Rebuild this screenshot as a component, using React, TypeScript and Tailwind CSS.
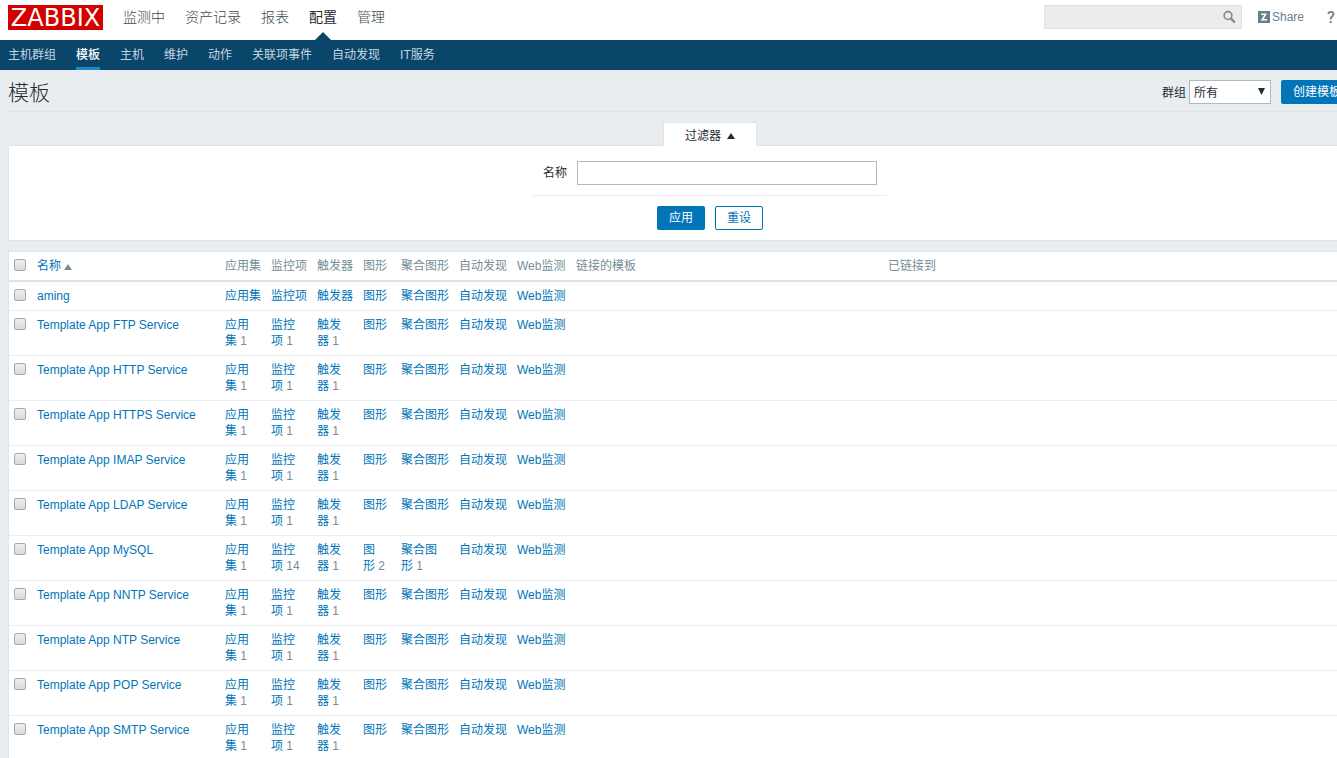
import React from "react";

const mainMenu = ["监测中", "资产记录", "报表", "配置", "管理"];
const subMenu = ["主机群组", "模板", "主机", "维护", "动作", "关联项事件", "自动发现", "IT服务"];
const entities = ["应用集", "监控项", "触发器", "图形", "聚合图形", "自动发现", "Web监测"];

type Template = { name: string; counts: number[] };

const templates: Template[] = [
  { name: "aming", counts: [] },
  { name: "Template App FTP Service", counts: [1, 1, 1] },
  { name: "Template App HTTP Service", counts: [1, 1, 1] },
  { name: "Template App HTTPS Service", counts: [1, 1, 1] },
  { name: "Template App IMAP Service", counts: [1, 1, 1] },
  { name: "Template App LDAP Service", counts: [1, 1, 1] },
  { name: "Template App MySQL", counts: [1, 14, 1, 2, 1] },
  { name: "Template App NNTP Service", counts: [1, 1, 1] },
  { name: "Template App NTP Service", counts: [1, 1, 1] },
  { name: "Template App POP Service", counts: [1, 1, 1] },
  { name: "Template App SMTP Service", counts: [1, 1, 1] },
];

function Checkbox({ label }: { label: string }) {
  return (
    <input
      type="checkbox"
      aria-label={label}
      className="mt-px block size-3 appearance-none rounded-xs border border-[#a9a9a9] bg-linear-to-b from-[#efefef] to-[#d9d9d9] checked:bg-[#0275b8]"
    />
  );
}

function Header() {
  return (
    <header>
      <div className="flex h-10 items-start bg-white pr-[85px] pl-2">
        <a
          href="#"
          className="mt-[5px] flex h-[25px] w-[95px] items-center justify-center bg-[#d40000] pt-px font-['DejaVu_Sans',sans-serif] text-2xl leading-none text-white"
        >
          ZABBIX
        </a>
        <nav className="ml-5 flex gap-5 text-sm">
          {mainMenu.map((item) => (
            <a
              key={item}
              href="#"
              className={
                item === "配置"
                  ? "relative flex h-10 items-start pt-[7px] text-[#1f2c33]"
                  : "flex h-10 items-start pt-[7px] font-light text-[#3c4a52]"
              }
            >
              {item}
              {item === "配置" && (
                <svg className="absolute bottom-0 left-1/2 -translate-x-1/2" width="16" height="8" viewBox="0 0 16 8" aria-hidden="true">
                  <path d="M0 8 8 0l8 8Z" fill="#0a466a" />
                </svg>
              )}
            </a>
          ))}
        </nav>
        <form className="mt-[5px] ml-auto flex h-6 w-[198px] items-center border border-[#e0e3e5] bg-[#ececec]" onSubmit={(e) => e.preventDefault()}>
          <input type="text" aria-label="搜索" className="h-full min-w-0 flex-1 px-1 outline-none" />
          <button type="submit" aria-label="搜索" className="flex w-6 items-center justify-center">
            <svg width="14" height="14" viewBox="0 0 14 14" fill="none" stroke="#768d99" aria-hidden="true">
              <circle cx="6" cy="5.5" r="3.9" strokeWidth="1.6" />
              <path d="m8.8 8.4 4.1 4.1" strokeWidth="2.2" />
            </svg>
          </button>
        </form>
        <a href="#" className="mt-[9px] ml-4 flex items-center gap-0.5 text-[#69808d]">
          <svg width="12" height="12" viewBox="0 0 12 12" aria-hidden="true">
            <path d="M0 0h12v12H0Z" fill="#69808d" />
            <path d="M3.2 3.2h4.4L4.2 8.8H9" fill="none" stroke="#fff" strokeWidth="1.6" />
          </svg>
          Share
        </a>
        <a href="#" className="mt-[9px] ml-[23px] w-2 font-['Roboto',sans-serif] text-base leading-[18px] font-medium text-[#69808d]">
          ?
        </a>
      </div>
      <nav className="flex h-[30px] gap-5 bg-[#0a466a] px-2">
        {subMenu.map((item) => (
          <a
            key={item}
            href="#"
            className={
              item === "模板"
                ? "flex items-center border-y-3 border-t-transparent border-b-[#1a87c9] font-medium text-white"
                : "flex items-center border-y-3 border-transparent text-[#c5d6e0]"
            }
          >
            {item}
          </a>
        ))}
      </nav>
    </header>
  );
}

function Filter() {
  return (
    <section className="mt-2.5">
      <div className="relative mx-auto -mb-px flex h-6 w-[94px] border border-b-0 border-[#dfe4e7] bg-white">
        <button type="button" className="flex w-full items-center justify-center gap-1.5 pt-0.5">
          过滤器
          <svg width="8" height="6" viewBox="0 0 8 6" aria-hidden="true">
            <path d="M0 6 4 0l4 6Z" fill="#1f2c33" />
          </svg>
        </button>
      </div>
      <form className="border border-[#dfe4e7] bg-white pt-[15px] pb-2.5" onSubmit={(e) => e.preventDefault()}>
        <div className="mx-auto flex w-[354px] items-center justify-center gap-2.5 border-b border-[#ebeef0] pb-2.5">
          <label htmlFor="filter-name">名称</label>
          <input id="filter-name" type="text" className="h-6 w-[300px] border border-[#acbbc2] px-1 outline-none" />
        </div>
        <div className="mt-2.5 flex justify-center gap-2.5">
          <button type="submit" className="h-6 w-12 rounded-xs bg-[#0275b8] text-white">
            应用
          </button>
          <button type="reset" className="h-6 w-12 rounded-xs border border-[#0275b8] bg-white text-[#0275b8]">
            重设
          </button>
        </div>
      </form>
    </section>
  );
}

function TemplateTable() {
  return (
    <table className="mt-2.5 w-full table-fixed border-separate border-spacing-0 border border-[#dfe4e7] bg-white text-left [&_td]:border-b [&_td]:border-[#ebeef0] [&_td]:px-[5px] [&_td]:py-1.5 [&_td]:align-top [&_th]:border-b-2 [&_th]:border-[#dfe4e7] [&_th]:px-[5px] [&_th]:py-1.5 [&_th]:font-normal [&_th]:text-[#768d99]">
      <colgroup>
        <col className="w-[23px]" />
        <col className="w-[188px]" />
        <col className="w-[46px]" />
        <col className="w-[46px]" />
        <col className="w-[46px]" />
        <col className="w-[38px]" />
        <col className="w-[58px]" />
        <col className="w-[58px]" />
        <col className="w-[59px]" />
        <col className="w-[312px]" />
        <col />
      </colgroup>
      <thead>
        <tr>
          <th className="align-top">
            <Checkbox label="全选" />
          </th>
          <th>
            <a href="#" className="flex items-center gap-[3px] text-[#0275b8]">
              名称
              <svg className="mt-0.5" width="8" height="6" viewBox="0 0 8 6" aria-hidden="true">
                <path d="M0 6 4 0l4 6Z" fill="#768d99" />
              </svg>
            </a>
          </th>
          {entities.map((e) => (
            <th key={e} className="whitespace-nowrap">
              {e}
            </th>
          ))}
          <th>链接的模板</th>
          <th>已链接到</th>
        </tr>
      </thead>
      <tbody>
        {templates.map((t) => (
          <tr key={t.name}>
            <td>
              <Checkbox label={t.name} />
            </td>
            <td>
              <a href="#" className="text-[#0275b8] hover:underline">
                {t.name}
              </a>
            </td>
            {entities.map((e, i) => (
              <td key={e} className="text-[#768d99]">
                <a href="#" className="text-[#0275b8] hover:underline">
                  {e}
                </a>
                {t.counts[i] ? <span>{"\u00a0" + t.counts[i]}</span> : null}
              </td>
            ))}
            <td />
            <td />
          </tr>
        ))}
      </tbody>
    </table>
  );
}

export default function App() {
  return (
    <div className="min-h-screen overflow-x-auto bg-[#e9edf0] font-['Liberation_Sans','Noto_Sans_CJK_SC',sans-serif] text-xs leading-4 text-[#1f2c33] [scrollbar-width:none]">
      <div className="min-w-[1420px]">
        <Header />
        <main className="px-2">
          <div className="flex h-[42px] items-center border-b border-[#dfe4e7] pr-[59px]">
            <h1 className="pt-1 text-[21px] leading-6 font-light">模板</h1>
            <form className="ml-auto flex items-center pt-0.5" onSubmit={(e) => e.preventDefault()}>
              <label htmlFor="group" className="mr-[3px] pt-0.5">
                群组
              </label>
              <div className="relative">
                <select id="group" className="block h-6 w-[82px] appearance-none border border-[#acbbc2] bg-white pt-0.5 pr-5 pl-1 outline-none">
                  <option>所有</option>
                </select>
                <svg className="pointer-events-none absolute top-2 right-1.5" width="7" height="7" viewBox="0 0 7 7" aria-hidden="true">
                  <path d="M0 0h7L3.5 7Z" fill="#1f2c33" />
                </svg>
              </div>
              <button type="button" className="ml-2.5 h-6 w-[72px] rounded-xs bg-[#0275b8] text-white">
                创建模板
              </button>
            </form>
          </div>
          <Filter />
          <TemplateTable />
        </main>
      </div>
    </div>
  );
}
